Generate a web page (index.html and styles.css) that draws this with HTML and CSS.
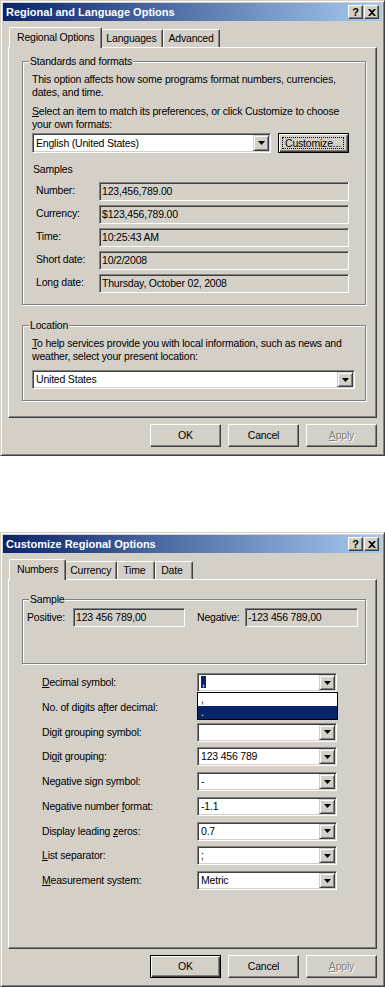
FILE: index.html
```html
<!DOCTYPE html>
<html>
  <head>
    <title>Regional and Language Options</title>
    <meta http-equiv="Content-Type" content="text/html; charset=UTF-8">
    <link rel="stylesheet" href="styles.css">
  </head>

  <body>
    <!-- First dialog: Regional and Language Options -->
    <div class="window win-regional">
      <div class="titlebar">
        <span class="title">Regional and Language Options</span>
        <div class="caption-btns">
          <span class="cbtn">?</span>
          <span class="cbtn"><svg width="8" height="7" viewBox="0 0 8 7"><path d="M0 0h2l2 2 2-2h2L5 3.5 8 7H6L4 5 2 7H0l3-3.5z"/></svg></span>
        </div>
      </div>
      <div class="client">
        <div class="tabs">
          <span class="tab active">Regional Options</span>
          <span class="tab">Languages</span>
          <span class="tab">Advanced</span>
        </div>
        <div class="panel panel-regional">
          <div class="group group-formats">
            <span class="group-label">Standards and formats</span>
            <p class="para">This option affects how some programs format numbers, currencies,<br>dates, and time.</p>
            <p class="para para-gap"><u>S</u>elect an item to match its preferences, or click Customize to choose<br>your own formats:</p>
            <div class="combo-row">
              <div class="combo combo-lang">
                <span class="combo-text">English (United States)</span>
                <span class="drop"><svg width="7" height="4" viewBox="0 0 7 4"><path d="M0 0h7L3.5 4z"/></svg></span>
              </div>
              <span class="btn btn-customize default"><span class="focus-rect">Customize...</span></span>
            </div>
            <div class="samples-title">Samples</div>
            <div class="samples">
              <span class="sample-label">Number:</span><div class="field">123,456,789.00</div>
              <span class="sample-label">Currency:</span><div class="field">$123,456,789.00</div>
              <span class="sample-label">Time:</span><div class="field">10:25:43 AM</div>
              <span class="sample-label">Short date:</span><div class="field">10/2/2008</div>
              <span class="sample-label">Long date:</span><div class="field">Thursday, October 02, 2008</div>
            </div>
          </div>

          <div class="group group-location">
            <span class="group-label">Location</span>
            <p class="para"><u>T</u>o help services provide you with local information, such as news and<br>weather, select your present location:</p>
            <div class="combo combo-location">
              <span class="combo-text">United States</span>
              <span class="drop"><svg width="7" height="4" viewBox="0 0 7 4"><path d="M0 0h7L3.5 4z"/></svg></span>
            </div>
          </div>
        </div>
        <div class="btn-row">
          <span class="btn">OK</span>
          <span class="btn">Cancel</span>
          <span class="btn disabled"><span><u>A</u>pply</span></span>
        </div>
      </div>
    </div>

    <!-- Second dialog: Customize Regional Options -->
    <div class="window win-custom">
      <div class="titlebar">
        <span class="title">Customize Regional Options</span>
        <div class="caption-btns">
          <span class="cbtn">?</span>
          <span class="cbtn"><svg width="8" height="7" viewBox="0 0 8 7"><path d="M0 0h2l2 2 2-2h2L5 3.5 8 7H6L4 5 2 7H0l3-3.5z"/></svg></span>
        </div>
      </div>
      <div class="client">
        <div class="tabs">
          <span class="tab active">Numbers</span>
          <span class="tab">Currency</span>
          <span class="tab">Time</span>
          <span class="tab">Date</span>
        </div>
        <div class="panel panel-custom">
          <div class="group group-sample">
            <span class="group-label">Sample</span>
            <div class="sample-row">
              <span class="pos-label">Positive:</span>
              <div class="field field-pos">123 456 789,00</div>
              <span class="neg-label">Negative:</span>
              <div class="field field-neg">-123 456 789,00</div>
            </div>
          </div>

          <div class="settings">
            <span class="set-label"><u>D</u>ecimal symbol:</span>
            <div class="combo combo-set has-list">
              <span class="combo-text"><span class="sel">,</span></span>
              <span class="drop"><svg width="7" height="4" viewBox="0 0 7 4"><path d="M0 0h7L3.5 4z"/></svg></span>
              <div class="droplist">
                <div class="item">,</div>
                <div class="item selected">.</div>
              </div>
            </div>

            <span class="set-label">No. of digits a<u>f</u>ter decimal:</span>
            <div class="combo combo-set">
              <span class="combo-text"></span>
              <span class="drop"><svg width="7" height="4" viewBox="0 0 7 4"><path d="M0 0h7L3.5 4z"/></svg></span>
            </div>

            <span class="set-label">Digit <u>g</u>rouping symbol:</span>
            <div class="combo combo-set">
              <span class="combo-text"></span>
              <span class="drop"><svg width="7" height="4" viewBox="0 0 7 4"><path d="M0 0h7L3.5 4z"/></svg></span>
            </div>

            <span class="set-label">Dig<u>i</u>t grouping:</span>
            <div class="combo combo-set">
              <span class="combo-text">123 456 789</span>
              <span class="drop"><svg width="7" height="4" viewBox="0 0 7 4"><path d="M0 0h7L3.5 4z"/></svg></span>
            </div>

            <span class="set-label">Ne<u>g</u>ative sign symbol:</span>
            <div class="combo combo-set">
              <span class="combo-text">-</span>
              <span class="drop"><svg width="7" height="4" viewBox="0 0 7 4"><path d="M0 0h7L3.5 4z"/></svg></span>
            </div>

            <span class="set-label">Negative number <u>f</u>ormat:</span>
            <div class="combo combo-set">
              <span class="combo-text">-1.1</span>
              <span class="drop"><svg width="7" height="4" viewBox="0 0 7 4"><path d="M0 0h7L3.5 4z"/></svg></span>
            </div>

            <span class="set-label">Display leading <u>z</u>eros:</span>
            <div class="combo combo-set">
              <span class="combo-text">0.7</span>
              <span class="drop"><svg width="7" height="4" viewBox="0 0 7 4"><path d="M0 0h7L3.5 4z"/></svg></span>
            </div>

            <span class="set-label"><u>L</u>ist separator:</span>
            <div class="combo combo-set">
              <span class="combo-text">;</span>
              <span class="drop"><svg width="7" height="4" viewBox="0 0 7 4"><path d="M0 0h7L3.5 4z"/></svg></span>
            </div>

            <span class="set-label"><u>M</u>easurement system:</span>
            <div class="combo combo-set">
              <span class="combo-text">Metric</span>
              <span class="drop"><svg width="7" height="4" viewBox="0 0 7 4"><path d="M0 0h7L3.5 4z"/></svg></span>
            </div>
          </div>
        </div>
        <div class="btn-row">
          <span class="btn default">OK</span>
          <span class="btn">Cancel</span>
          <span class="btn disabled"><span><u>A</u>pply</span></span>
        </div>
      </div>
    </div>
  </body>
</html>
```

FILE: styles.css
```css
body {
  margin: 0;
  background: #fff;
  font-family: "Liberation Sans", Arial, sans-serif;
  font-size: 10.5px;
  letter-spacing: -0.2px;
  line-height: 13px;
  color: #000;
}
p { margin: 0; }

/* window frame */
.window {
  box-sizing: border-box;
  width: 385px;
  display: flex;
  flex-direction: column;
  padding: 2px;
  background: #d4d0c8;
  border: 1px solid;
  border-color: #d4d0c8 #404040 #404040 #d4d0c8;
  box-shadow: inset 1px 1px #fff, inset -1px -1px #808080;
}
.win-regional { height: 456px; }
.win-custom { height: 455px; margin-top: 76px; }

.titlebar {
  flex: none;
  height: 18px;
  display: flex;
  align-items: center;
  justify-content: space-between;
  padding: 0 3px 0 3px;
  background: linear-gradient(to right, #0a246a, #a6caf0);
}
.title { color: #fff; font-weight: bold; font-size: 11px; letter-spacing: 0; }
.caption-btns { display: flex; gap: 1px; }
.cbtn {
  box-sizing: border-box;
  width: 15px;
  height: 14px;
  display: flex;
  align-items: center;
  justify-content: center;
  background: #d4d0c8;
  border: 1px solid;
  border-color: #fff #404040 #404040 #fff;
  box-shadow: inset -1px -1px #808080;
  font-weight: bold;
  font-size: 11px;
}

.client {
  flex: 1;
  display: flex;
  flex-direction: column;
  padding: 6px 5px 6px;
}

/* tabs */
.tabs {
  display: flex;
  align-items: flex-end;
  height: 21px;
  margin-bottom: -1px;
  padding-left: 3px;
  position: relative;
  z-index: 1;
}
.tab {
  box-sizing: border-box;
  height: 18px;
  min-width: 38px;
  margin-bottom: 1px;
  padding: 2px 5px 0 5px;
  border: 1px solid;
  border-bottom: 0;
  border-color: #fff #404040 transparent #fff;
  border-radius: 2px 2px 0 0;
  box-shadow: inset -1px 0 #808080;
  background: #d4d0c8;
}
.tab.active {
  height: 21px;
  margin: 0 -2px 0 -2px;
  padding: 3px 7px 0;
  position: relative;
  z-index: 2;
}

.panel {
  flex: 1;
  box-sizing: border-box;
  border: 1px solid;
  border-color: #fff #404040 #404040 #fff;
  box-shadow: inset -1px -1px #808080;
}
.panel-regional { padding: 13px 10px 0 13px; }
.panel-custom { padding: 19px 10px 0 13px; }

/* group boxes */
.group {
  position: relative;
  border: 1px solid #808080;
  box-shadow: inset 1px 1px #fff, 1px 1px #fff;
  padding: 11px 9px;
}
.group-label {
  position: absolute;
  top: -7px;
  left: 6px;
  padding: 0 1px;
  background: #d4d0c8;
}
.group-location { margin-top: 20px; }
.para { white-space: nowrap; }
.para-gap { margin-top: 6px; }

.combo-row { display: flex; gap: 7px; margin-top: 2px; }
.combo {
  box-sizing: border-box;
  height: 20px;
  display: flex;
  align-items: center;
  padding: 0 0 0 3px;
  background: #fff;
  border: 1px solid;
  border-color: #808080 #fff #fff #808080;
  box-shadow: inset 1px 1px #404040, inset -1px -1px #d4d0c8;
  position: relative;
}
.combo-text { flex: 1; white-space: nowrap; }
.drop {
  box-sizing: border-box;
  width: 16px;
  align-self: stretch;
  margin: 1px;
  display: flex;
  align-items: center;
  justify-content: center;
  background: #d4d0c8;
  border: 1px solid;
  border-color: #d4d0c8 #404040 #404040 #d4d0c8;
  box-shadow: inset 1px 1px #fff, inset -1px -1px #808080;
}
.combo-lang { width: 239px; }
.combo-location { width: 323px; height: 19px; margin-top: 7px; }

.samples-title { margin-top: 10px; padding-left: 1px; }
.samples {
  display: grid;
  grid-template-columns: 63px 250px;
  row-gap: 4px;
  margin-top: 6px;
  padding-left: 4px;
}
.sample-label { padding-top: 2px; }
.field {
  box-sizing: border-box;
  height: 19px;
  padding: 2px 2px 0;
  white-space: nowrap;
  border: 1px solid;
  border-color: #808080 #fff #fff #808080;
  box-shadow: inset 1px 1px #404040, inset -1px -1px #d4d0c8;
}

/* buttons */
.btn-row {
  display: flex;
  justify-content: flex-end;
  gap: 7px;
  margin-top: 6px;
}
.btn {
  box-sizing: border-box;
  width: 71px;
  height: 23px;
  display: flex;
  align-items: center;
  justify-content: center;
  background: #d4d0c8;
  border: 1px solid;
  border-color: #fff #404040 #404040 #fff;
  box-shadow: inset -1px -1px #808080;
}
.btn.default {
  border-color: #000;
  box-shadow: inset 1px 1px #fff, inset -1px -1px #404040, inset -2px -2px #808080;
}
.btn.disabled { color: #808080; text-shadow: 1px 1px #fff; }
.btn-customize { height: 20px; }
.focus-rect {
  flex: 1;
  align-self: stretch;
  margin: 3px 4px 3px 3px;
  display: flex;
  align-items: center;
  justify-content: center;
  border: 1px dotted #000;
}

/* customize dialog */
.group-sample { padding: 8px 4px 36px; }
.sample-row { display: flex; align-items: center; }
.pos-label { width: 46px; }
.neg-label { width: 48px; margin-left: 12px; }
.field-pos { width: 112px; }
.field-neg { width: 113px; }

.settings {
  display: grid;
  grid-template-columns: 155px 140px;
  row-gap: 5.75px;
  align-items: center;
  margin: 9px 0 0 20px;
}
.combo-set { height: 19px; }
.sel { background: #0a246a; color: #fff; padding: 0 1px; }
.droplist {
  position: absolute;
  top: 18px;
  left: -1px;
  width: 141px;
  box-sizing: border-box;
  border: 1px solid #000;
  background: #fff;
  z-index: 3;
}
.item { height: 13px; padding-left: 3px; }
.item.selected { background: #0a246a; color: #fff; }
```
